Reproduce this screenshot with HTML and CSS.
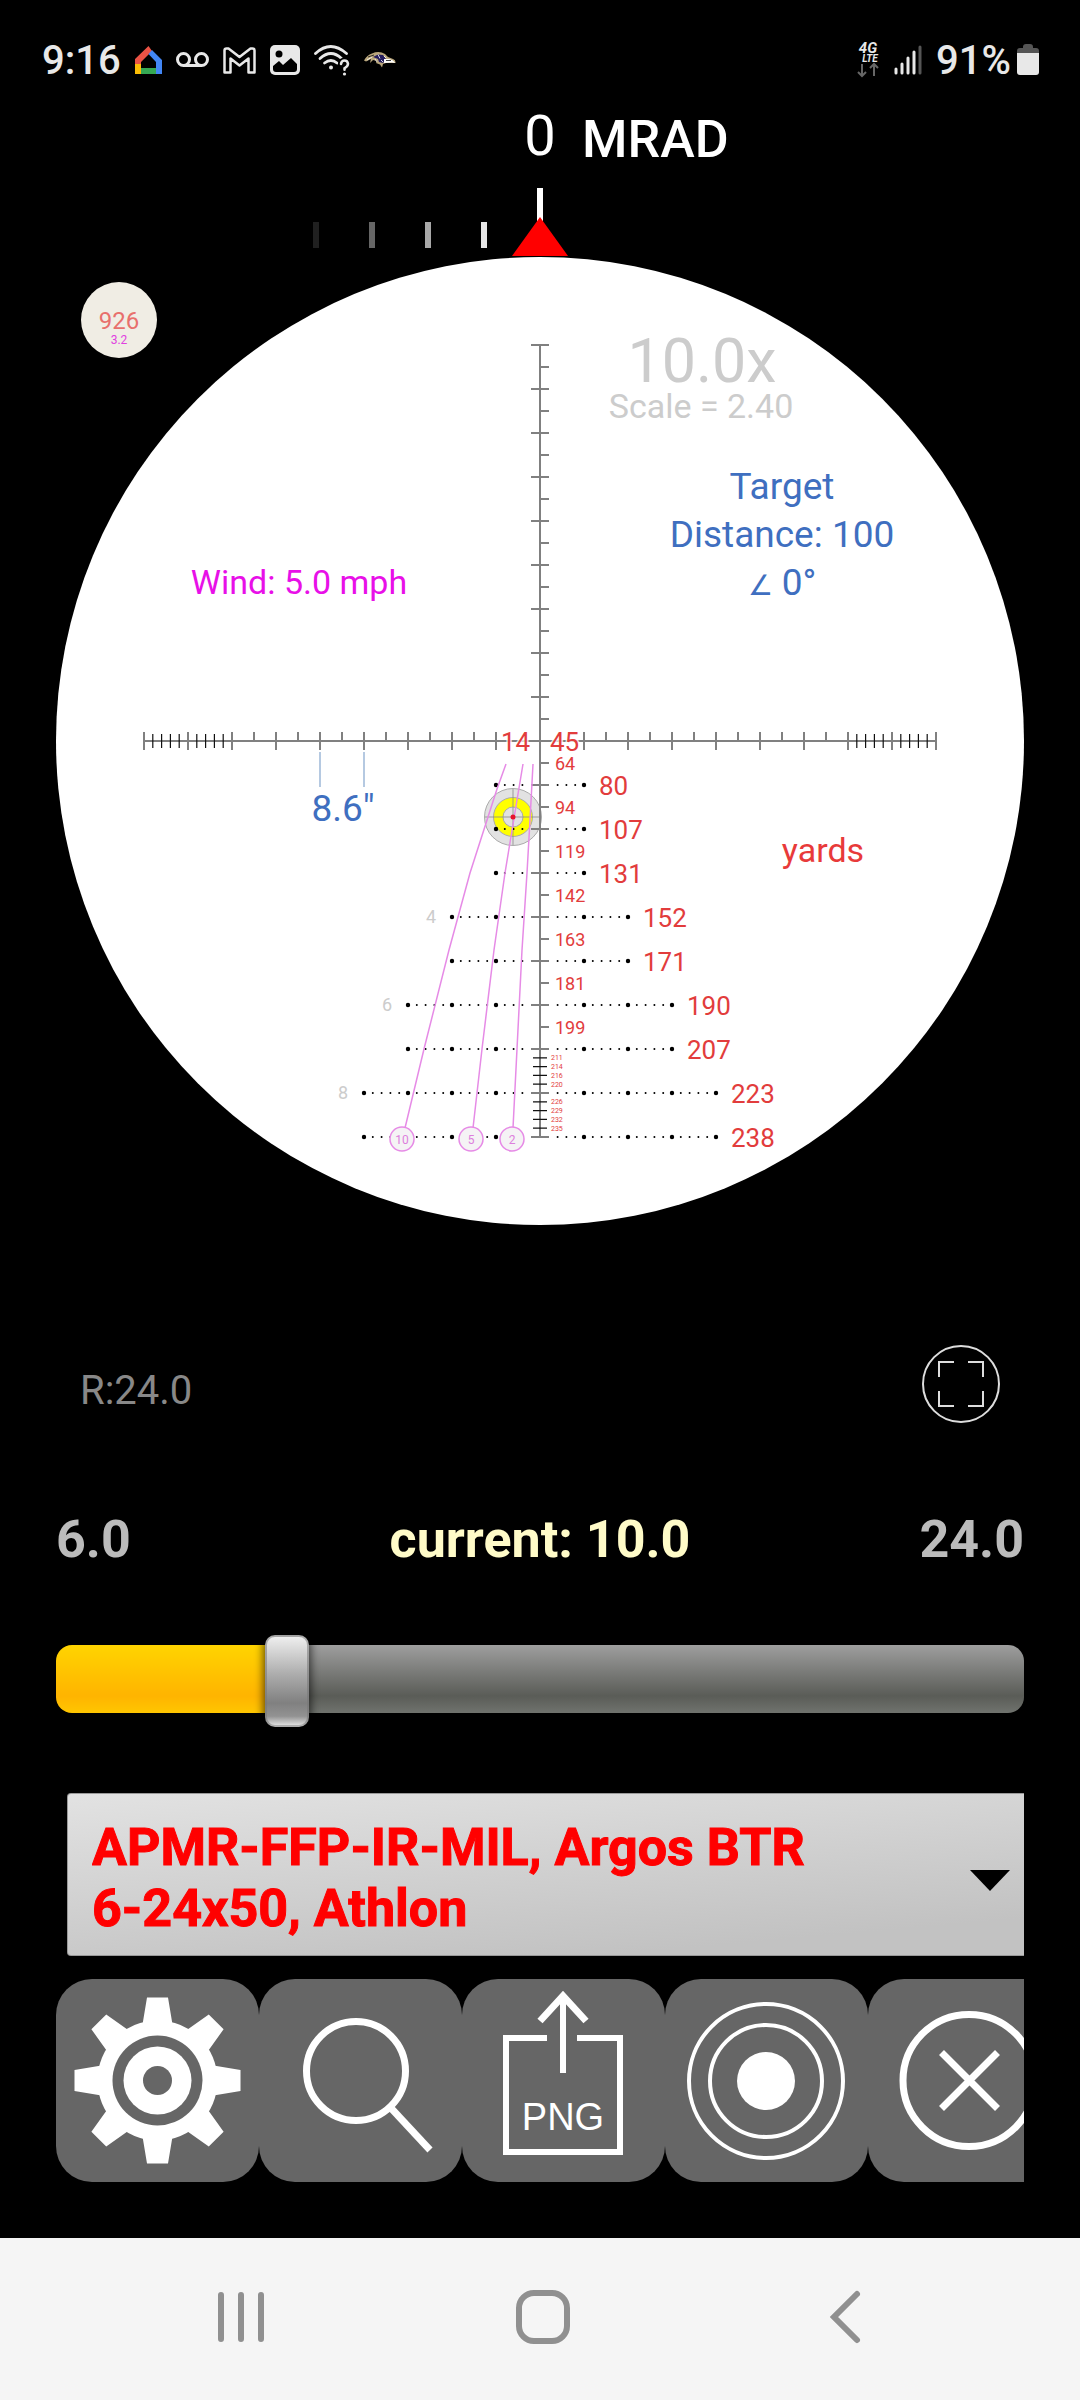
FILE: index.html
```
<!DOCTYPE html>
<html lang="en">
<head>
  <meta charset="UTF-8" />
  <meta name="viewport" content="width=device-width, initial-scale=1.0" />
  <title>Reticle</title>
  <link rel="stylesheet" href="styles.css">
</head>
<body>
  <header class="status-bar">
    <div class="status-left">
      <span class="clock">9:16</span>
      <svg width="27" height="28" viewBox="0 0 27 28">
        <path d="M13.500 0L0 13v7h6v-4l11-11z" fill="#ea5345"/>
        <path d="M17 4l10 10v14h-6V16l-7.500-8z" fill="#4286f5"/>
        <path d="M0 18h6v10H0z" fill="#fbbc05"/>
        <path d="M6 22h15v6H6z" fill="#35a853"/>
      </svg>
      <svg width="33" height="16" viewBox="0 0 33 16" fill="none" stroke="#e8e8e8" stroke-width="3">
        <circle cx="7.500" cy="7.500" r="6"/>
        <circle cx="25.500" cy="7.500" r="6"/>
        <path d="M7 13.500h19"/>
      </svg>
      <svg width="33" height="27" viewBox="0 0 33 27" fill="none" stroke="#e8e8e8" stroke-width="2.500" stroke-linejoin="round">
        <path d="M1.500 3.500q0-2 2-2h2l11 8.500 11-8.500h2q2 0 2 2v22h-6V11.500l-9 7-9-7v14h-6z"/>
      </svg>
      <svg width="30" height="30" viewBox="0 0 30 30">
        <rect width="30" height="30" rx="5" fill="#e8e8e8"/>
        <circle cx="9" cy="9" r="3.500" fill="#000"/>
        <path d="M3 21l6-5 4 4 8-7 6 6v5q0 3-3 3H6q-3 0-3-3z" fill="#000"/>
      </svg>
      <svg width="36" height="32" viewBox="0 0 36 32" fill="none" stroke="#e8e8e8" stroke-width="2.800" stroke-linecap="round">
        <path d="M1.500 9.500q15-14 31 0"/>
        <path d="M6 14.500q11-10 21.500 0"/>
        <path d="M10.500 19q6.500-5 12.500 0"/>
        <circle cx="17" cy="23.500" r="2" fill="#e8e8e8" stroke="none"/>
        <path d="M27 20q.5-3.500 3.500-3.500t3.500 3.200q0 2.300-3.500 4.500v1.500" stroke="#000" stroke-width="6"/>
        <path d="M27 20q.5-3.500 3.500-3.500t3.500 3.200q0 2.300-3.500 4.500v1.500" stroke-width="2.500"/>
        <circle cx="30.500" cy="30" r="1.600" fill="#e8e8e8" stroke="none"/>
      </svg>
      <svg width="32" height="16" viewBox="0 0 32 16">
        <path d="M0 8.500Q3 3 8 1.500q7-3 13 .5l3 3 5 2q3 1 2.500 4L29 11l-7 0-3 1-1 3.500-2-3-4-1.500 1-2-4-1-3 3 1-4-5 2.500z" fill="#b9a67c"/>
        <path d="M9 5l5-2.500 5 .5 3 4-3 4-4-1-1-3z" fill="#241c5e"/>
        <path d="M20 7l5 0q5 1 6 4l-3-.5-8 .5z" fill="#fff"/>
        <path d="M8 5l-5 3M11 7l2 3M14 2.500l2 4M17 8l2 2M20 4l2 2" stroke="#fff" stroke-width=".8"/>
        <path d="M4 5l6-2M22 8.500l5 0" stroke="#111" stroke-width=".8"/>
      </svg>
    </div>
    <div class="status-right">
      <svg class="lte" width="24" height="36" viewBox="0 0 24 36">
        <text x="12" y="11" class="lte-top">4G</text>
        <text x="14" y="20" class="lte-low">LTE</text>
        <path d="M6 22v12M2 30l4 4 4-4M18 34V22M14 26l4-4 4 4" fill="none" stroke="#666" stroke-width="2"/>
      </svg>
      <svg width="28" height="30" viewBox="0 0 28 30" stroke="#e8e8e8" stroke-width="3" stroke-linecap="round">
        <path d="M2 24v4M8 19v9M14 13v15M20 7v21"/>
        <path d="M26 2v26" stroke="#555"/>
      </svg>
      <span class="battery-level">91%</span>
      <svg width="22" height="32" viewBox="0 0 22 32">
        <path d="M6 3q0-3 3-3h4q3 0 3 3v1h3q3 0 3 3v2H0V7q0-3 3-3h3z" fill="#555"/>
        <path d="M0 9h22v19q0 3-3 3H3q-3 0-3-3z" fill="#e8e8e8"/>
      </svg>
    </div>
  </header>

  <main class="app">
    <!-- origin is the reticle centre, 1 mil = 44 units -->
    <svg class="scope" viewBox="-484 -641 968 1125">
      <!-- windage turret -->
      <text x="0" y="-586" class="turret-value">0</text>
      <text x="42" y="-584" class="turret-unit">MRAD</text>
      <g stroke-width="6">
        <path d="M-224-519v26" stroke="#202020"/>
        <path d="M-168-519v26" stroke="#666"/>
        <path d="M-112-519v26" stroke="#a8a8a8"/>
        <path d="M-56-519v26" stroke="#e6e6e6"/>
        <path d="M0-553v40" stroke="#fff"/>
      </g>
      <path d="M0-524L28-485H-28z" fill="#f00"/>

      <circle r="484" fill="#fff"/>

      <circle cx="-421" cy="-421" r="38" fill="#f0ede4"/>
      <text x="-421" y="-412" class="badge-value">926</text>
      <text x="-421" y="-397" class="badge-wind">3.2</text>

      <!-- target -->
      <g transform="translate(-27 76)" stroke="#aaa" stroke-width="1">
        <circle r="28.500" fill="#e2e2e2"/>
        <circle r="19.500" fill="#ff0"/>
        <circle r="10" fill="#e2e2e2"/>
        <path d="M-28 0h56M0-28v56" stroke="#8888" stroke-width="1.500"/>
      </g>

      <!-- main axes with full and half mil ticks -->
      <g stroke="#808080">
        <path d="M-396 0h792M0-396v792" stroke-width="2"/>
        <path d="M-397 0h794" stroke-width="18" stroke-dasharray="2 42"/>
        <path d="M-287-4.500h264M65-4.500h244" stroke-width="9" stroke-dasharray="2 42"/>
        <path d="M0-397v794" stroke-width="18" stroke-dasharray="2 42"/>
        <path d="M4.500-375v684" stroke-width="9" stroke-dasharray="2 42"/>
      </g>
      <!-- 0.2 mil ticks -->
      <g stroke="#111" stroke-width="14" stroke-dasharray="1.200 7.600">
        <path d="M-387.800 0h28M-343.800 0h28M316.200 0h28M360.200 0h28"/>
        <path d="M0 316.200v28M0 360.200v28"/>
      </g>

      <!-- holdover dots, one row per mil -->
      <g stroke="#000" stroke-linecap="round" fill="none">
        <g stroke-width="2" stroke-dasharray="0 8.800">
          <path d="M17.600 44H44M17.600 88H44M17.600 132H44M17.600 176H88M17.600 220H88M17.600 264H132M17.600 308H132M17.600 352H176M17.600 396H176"/>
          <path d="M-17.600 44H-44M-17.600 88H-44M-17.600 132H-44M-17.600 176H-88M-17.600 220H-88M-17.600 264H-132M-17.600 308H-132M-17.600 352H-176M-17.600 396H-176"/>
        </g>
        <g stroke-width="4.400" stroke-dasharray="0 44">
          <path d="M44 44h1M44 88h1M44 132h1M44 176h45M44 220h45M44 264h89M44 308h89M44 352h133M44 396h133"/>
          <path d="M-44 44h-1M-44 88h-1M-44 132h-1M-44 176h-45M-44 220h-45M-44 264h-89M-44 308h-89M-44 352h-133M-44 396h-133"/>
        </g>
      </g>

      <!-- wind holds for 10, 5 and 2 mph -->
      <g class="wind-lines">
        <path d="M-34 23L-43 48L-52 76L-70 132L-91 209L-116 308L-135 387"/>
        <path d="M-17 23L-23 59L-35 132L-46 209L-58 308L-67 387"/>
        <path d="M-7 23L-10 79L-13 132L-18 209L-23 308L-27 387"/>
        <circle cx="-138" cy="398" r="12"/>
        <circle cx="-69" cy="398" r="12"/>
        <circle cx="-28" cy="398" r="12"/>
      </g>
      <circle cx="-27" cy="76" r="2.500" fill="#e8112d"/>
      <g class="wind-labels">
        <text x="-138" y="403">10</text>
        <text x="-69" y="403">5</text>
        <text x="-28" y="403">2</text>
      </g>

      <!-- mil numbers -->
      <g class="mil-labels">
        <text x="-109" y="182">4</text>
        <text x="-153" y="270">6</text>
        <text x="-197" y="358">8</text>
      </g>

      <!-- ranges -->
      <g class="range-large">
        <text x="-39" y="10">14</text>
        <text x="10" y="10">45</text>
        <text x="59" y="54">80</text>
        <text x="59" y="98">107</text>
        <text x="59" y="142">131</text>
        <text x="103" y="186">152</text>
        <text x="103" y="230">171</text>
        <text x="147" y="274">190</text>
        <text x="147" y="318">207</text>
        <text x="191" y="362">223</text>
        <text x="191" y="406">238</text>
      </g>
      <g class="range-medium">
        <text x="15" y="29">64</text>
        <text x="15" y="73">94</text>
        <text x="15" y="117">119</text>
        <text x="15" y="161">142</text>
        <text x="15" y="205">163</text>
        <text x="15" y="249">181</text>
        <text x="15" y="293">199</text>
      </g>
      <g class="range-small">
        <text x="11" y="319">211</text>
        <text x="11" y="328">214</text>
        <text x="11" y="337">216</text>
        <text x="11" y="346">220</text>
        <text x="11" y="363">226</text>
        <text x="11" y="372">229</text>
        <text x="11" y="381">232</text>
        <text x="11" y="390">235</text>
      </g>
      <text x="283" y="121" class="info units">yards</text>

      <text x="162" y="-359" class="power">10.0x</text>
      <text x="161" y="-323" class="info scale">Scale = 2.40</text>
      <g class="target-info">
        <text x="242" y="-242">Target</text>
        <text x="242" y="-194">Distance: 100</text>
        <text x="242" y="-146"><tspan class="angle">∠</tspan> 0°</text>
      </g>
      <text x="-241" y="-147" class="info wind">Wind: 5.0 mph</text>
      <path d="M-220 11v35M-176 11v35" stroke="#9db8d8" stroke-width="1.500"/>
      <text x="-197" y="80" class="target-info">8.6"</text>
    </svg>

    <div class="reticle-row">
      <span class="reticle-power">R:24.0</span>
      <button class="fullscreen" aria-label="Full screen">
        <svg width="78" height="78" viewBox="0 0 78 78" fill="none" stroke="#ddd" stroke-width="2">
          <circle cx="39" cy="39" r="38"/>
          <path d="M17 32V17h15M46 17h15v15M61 46v15H46M32 61H17V46"/>
        </svg>
      </button>
    </div>

    <div class="zoom-labels">
      <span>6.0</span>
      <label for="zoom" class="zoom-current">current: 10.0</label>
      <span class="zoom-max">24.0</span>
    </div>
    <input type="range" id="zoom" class="zoom-slider" min="6" max="24" step="0.01" value="10.08" style="--fill: 24%">

    <div class="reticle-picker">
      <select class="reticle-select" aria-label="Reticle">
        <option>APMR-FFP-IR-MIL, Argos BTR 6-24x50, Athlon</option>
      </select>
      <svg class="picker-arrow" width="40" height="21" viewBox="0 0 40 21"><path d="M0 0h40L20 21z"/></svg>
    </div>

    <div class="toolbar">
      <button class="tool" aria-label="Settings">
        <svg viewBox="0 0 203 203">
          <g transform="translate(101.500 101.500)" fill="#fff">
            <circle r="60"/>
            <path d="M-10.500-83h21L15-56h-30zM-10.500 83h21L15 56h-30zM-83-10.500v21L-56 15v-30zM83-10.500v21L56 15v-30z"/>
            <path transform="rotate(45)" d="M-10.500-83h21L15-56h-30zM-10.500 83h21L15 56h-30zM-83-10.500v21L-56 15v-30zM83-10.500v21L56 15v-30z"/>
            <circle r="45" fill="#666"/>
            <circle r="34"/>
            <circle r="14.500" fill="#666"/>
          </g>
        </svg>
      </button>
      <button class="tool" aria-label="Search">
        <svg viewBox="0 0 203 203" fill="none" stroke="#fff" stroke-width="7">
          <circle cx="97" cy="92" r="49.500"/>
          <path d="M131 128l40 43"/>
        </svg>
      </button>
      <button class="tool">
        <svg viewBox="0 0 203 203" fill="none" stroke="#fff" stroke-width="6">
          <path d="M85 59H44v114h114V59h-43"/>
          <path d="M101 94V18"/>
          <path d="M78 42l23-25 23 25" stroke-width="7"/>
          <text x="101" y="151" class="png-label">PNG</text>
        </svg>
      </button>
      <button class="tool" aria-label="Target">
        <svg viewBox="0 0 203 203" fill="none" stroke="#fff" stroke-width="4">
          <circle cx="101" cy="102" r="77"/>
          <circle cx="101" cy="102" r="56"/>
          <circle cx="101" cy="102" r="29" fill="#fff" stroke="none"/>
        </svg>
      </button>
      <button class="tool" aria-label="Close">
        <svg viewBox="0 0 203 203" fill="none" stroke="#fff" stroke-width="7">
          <circle cx="101" cy="101.500" r="66"/>
          <path d="M73.500 73.500l56 56M129.500 73.500l-56 56"/>
        </svg>
      </button>
    </div>
  </main>

  <nav class="nav-bar">
    <button aria-label="Recent apps">
      <svg width="56" height="56" viewBox="0 0 56 56"><path d="M8 6v44M28 6v44M48 6v44"/></svg>
    </button>
    <button aria-label="Home">
      <svg width="56" height="56" viewBox="0 0 56 56"><rect x="4" y="4" width="48" height="48" rx="15"/></svg>
    </button>
    <button aria-label="Back">
      <svg width="56" height="56" viewBox="0 0 56 56"><path d="M40 5L17 28l23 23"/></svg>
    </button>
  </nav>
</body>
</html>
```
FILE: styles.css
```
body {
  margin: 0;
  min-height: 100vh;
  display: flex;
  flex-direction: column;
  background: #000;
  font-family: Roboto, sans-serif;
}
button {
  padding: 0;
  border: none;
  background: none;
  cursor: pointer;
}
svg {
  display: block;
}

/* status bar */
.status-bar {
  display: flex;
  justify-content: space-between;
  align-items: center;
  height: 80px;
  padding: 20px 41px 0 42px;
  color: #e8e8e8;
  font-size: 40px;
  font-weight: 500;
}
.status-left,
.status-right {
  display: flex;
  align-items: center;
  gap: 14px;
}
.battery-level {
  margin-right: -8px;
}
.lte {
  overflow: visible;
}
.lte text {
  fill: #e8e8e8;
  font-weight: 700;
  font-style: italic;
  text-anchor: middle;
}
.lte-top {
  font-size: 15px;
}
.lte-low {
  font-size: 10px;
}

.app {
  padding: 0 56px 56px;
}

/* scope view */
.scope {
  width: 100%;
}
.turret-value {
  fill: #fff;
  font-size: 56px;
  text-anchor: middle;
}
.turret-unit {
  fill: #fff;
  font-size: 52px;
  font-weight: 500;
}
.badge-value {
  fill: #e8706c;
  font-size: 24px;
  text-anchor: middle;
}
.badge-wind {
  fill: #e040e0;
  font-size: 12px;
  text-anchor: middle;
}
.wind-lines {
  fill: none;
  stroke: #e68be6;
  stroke-width: 1.5;
}
.wind-lines circle {
  fill: #f5f3f5;
}
.wind-labels {
  fill: #dd7fdd;
  font-size: 12px;
  text-anchor: middle;
}
.mil-labels {
  fill: #ccc;
  font-size: 18px;
  text-anchor: middle;
}
.range-large,
.range-medium,
.range-small {
  fill: #e23c3c;
}
.range-large {
  font-size: 26px;
  stroke: #fffc;
  stroke-width: 3;
  paint-order: stroke;
}
.range-medium {
  font-size: 18px;
}
.range-small {
  font-size: 7px;
}
.info {
  font-size: 34px;
  text-anchor: middle;
}
.units {
  fill: #e83a3a;
}
.scale {
  fill: #ccc;
}
.wind {
  fill: #e810e8;
}
.power {
  fill: #ccc;
  font-size: 61px;
  text-anchor: middle;
}
.target-info {
  fill: #3f6fc0;
  font-size: 37px;
  text-anchor: middle;
}
.angle {
  font-size: 28px;
}

.reticle-row {
  display: flex;
  justify-content: space-between;
  align-items: flex-end;
  margin-top: 120px;
  padding: 0 24px;
}
.reticle-power {
  color: #888;
  font-size: 40px;
  line-height: 64px;
}

/* zoom slider */
.zoom-labels {
  display: grid;
  grid-template-columns: 1fr auto 1fr;
  margin-top: 85px;
  color: #bbb;
  font-size: 52px;
  font-weight: 700;
  line-height: 64px;
}
.zoom-current {
  color: #fffbc8;
}
.zoom-max {
  text-align: right;
}
.zoom-slider {
  display: block;
  width: 100%;
  height: 68px;
  margin: 73px 0 0;
  appearance: none;
  background: none;
}
.zoom-slider::-webkit-slider-runnable-track {
  height: 68px;
  border-radius: 16px;
  background:
    linear-gradient(#ffd400, #ffb400 75%, #ffc600) 0 0 / var(--fill) 100% no-repeat,
    linear-gradient(#9e9e9e, #5a5c57 75%, #70736e);
}
.zoom-slider::-webkit-slider-thumb {
  appearance: none;
  width: 44px;
  height: 92px;
  margin-top: -10px;
  border: 2px solid #7778;
  border-radius: 10px;
  background: linear-gradient(#eee, #b0b0b0 40%, #808080 75%, #929292 90%, #ddd);
  box-shadow: 0 0 8px 2px #0009;
}

/* reticle drop-down */
.reticle-picker {
  position: relative;
  margin: 80px 0 0 11px;
}
.reticle-select {
  display: block;
  box-sizing: border-box;
  width: 100%;
  height: 163px;
  padding: 22px 190px 16px 24px;
  appearance: none;
  border: 1px solid #999;
  border-right: none;
  border-radius: 4px 0 0 4px;
  background: linear-gradient(175deg, #e2e2e2, #c2c2c2 85%);
  color: #f00;
  font-family: inherit;
  font-size: 52px;
  font-weight: 700;
  line-height: 61px;
  white-space: normal;
  -webkit-text-stroke: 1px #f00;
}
.picker-arrow {
  position: absolute;
  top: 77px;
  right: 14px;
  pointer-events: none;
}

.toolbar {
  display: flex;
  margin-top: 23px;
  overflow: hidden;
}
.tool {
  flex: 0 0 203px;
  height: 203px;
  border-radius: 36px;
  background: #666;
}
.png-label {
  fill: #fff;
  stroke: none;
  font-family: "Liberation Sans", sans-serif;
  font-size: 38px;
  text-anchor: middle;
}

/* system navigation */
.nav-bar {
  display: flex;
  justify-content: center;
  align-items: center;
  gap: 246px;
  height: 158px;
  margin-top: auto;
  padding: 0 0 4px 6px;
  background: #f5f5f5;
}
.nav-bar svg {
  fill: none;
  stroke: #909090;
  stroke-width: 6;
  stroke-linecap: round;
}
```
